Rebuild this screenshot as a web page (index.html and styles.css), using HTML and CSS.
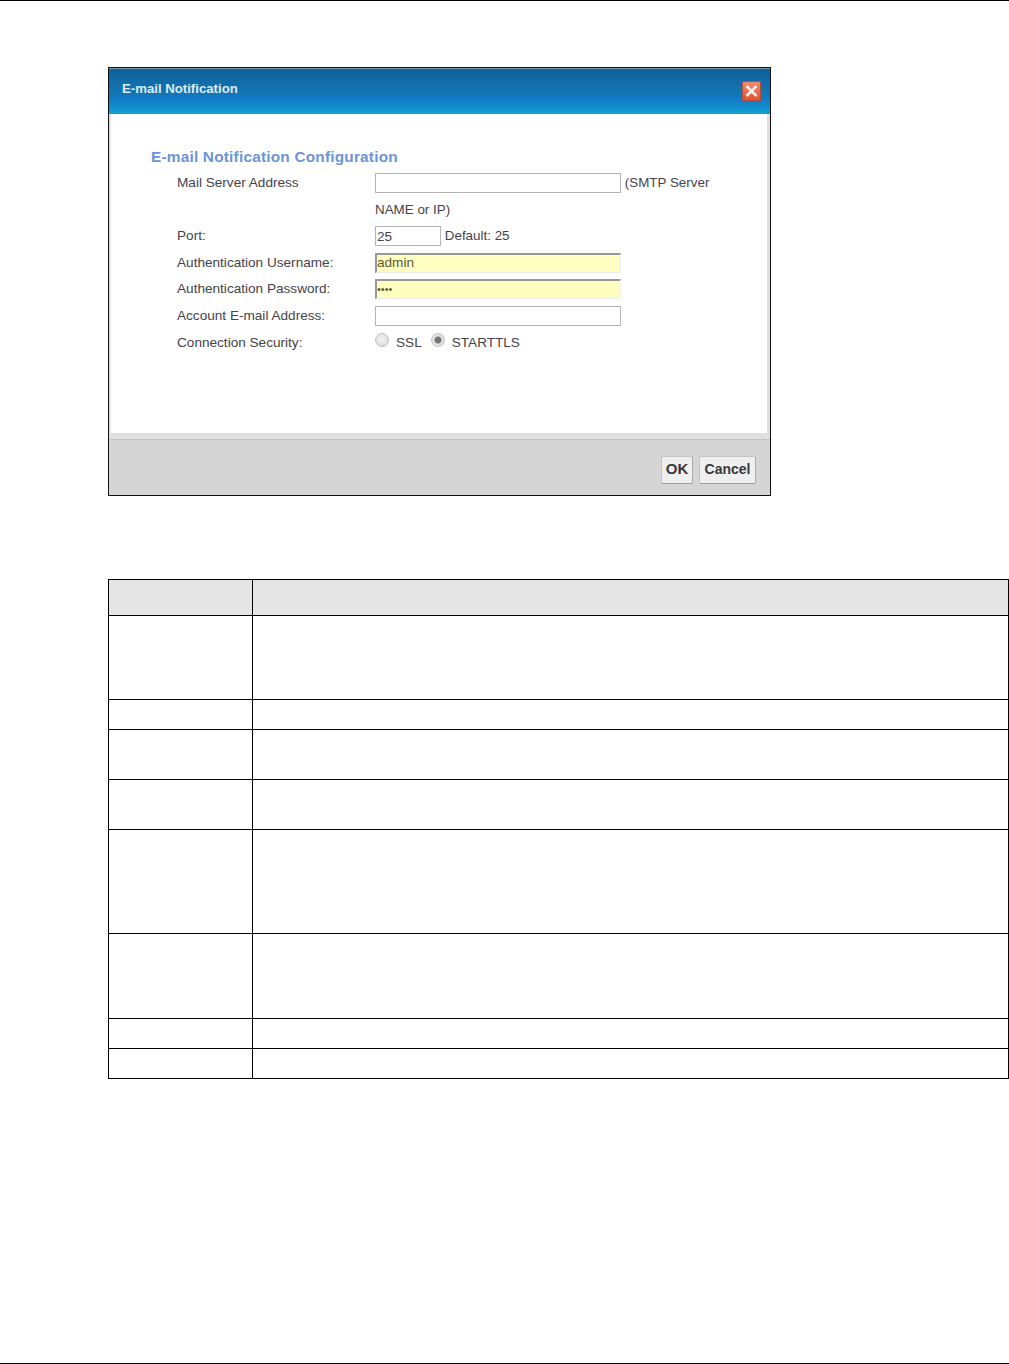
FILE: index.html
```html
<!DOCTYPE html>
<html lang="en">
<head>
<meta charset="utf-8">
<title>E-mail Notification</title>
<link rel="stylesheet" href="styles.css">
</head>
<body>
<div class="page-rule"></div>
<main class="content">
  <section class="dialog">
    <header class="dialog-head">
      <h1 class="dialog-title">E-mail Notification</h1>
      <button class="close" type="button" aria-label="Close">
        <svg width="19" height="20" viewBox="0 0 19 20">
          <defs>
            <linearGradient id="closebg" x1="0" y1="0" x2="0" y2="1">
              <stop offset="0" stop-color="#f08a70"/>
              <stop offset="1" stop-color="#e2502f"/>
            </linearGradient>
          </defs>
          <rect x="0.5" y="0.5" width="18" height="19" fill="url(#closebg)" stroke="#a8513f"/>
          <path d="M4.5 5 L14.5 15 M14.5 5 L4.5 15" stroke="#fbeee8" stroke-width="2.6" fill="none"/>
        </svg>
      </button>
    </header>
    <div class="dialog-body">
      <h2 class="section-title">E-mail Notification Configuration</h2>
      <div class="form">
        <div class="label">Mail Server Address</div>
        <div class="control control-wrap"><input class="field wide" type="text"> <span class="hint">(SMTP Server NAME or IP)</span></div>
        <div class="label">Port:</div>
        <div class="control"><input class="field port" type="text" value="25"> <span class="hint">Default: 25</span></div>
        <div class="label">Authentication Username:</div>
        <div class="control"><input class="field wide filled" type="text" value="admin"></div>
        <div class="label">Authentication Password:</div>
        <div class="control"><input class="field wide filled secret" type="password" value="1234"></div>
        <div class="label">Account E-mail Address:</div>
        <div class="control"><input class="field wide" type="text"></div>
        <div class="label">Connection Security:</div>
        <div class="control radios">
          <label class="radio-item"><input class="radio" type="radio" name="sec"> SSL</label>
          <label class="radio-item"><input class="radio" type="radio" name="sec" checked> STARTTLS</label>
        </div>
      </div>
    </div>
    <footer class="dialog-foot">
      <button class="btn btn-ok" type="button">OK</button>
      <button class="btn" type="button">Cancel</button>
    </footer>
  </section>

  <table class="spec">
    <colgroup><col class="col-a"><col></colgroup>
    <tr class="r-head"><th></th><th></th></tr>
    <tr class="r84"><td></td><td></td></tr>
    <tr class="r30"><td></td><td></td></tr>
    <tr class="r50"><td></td><td></td></tr>
    <tr class="r50"><td></td><td></td></tr>
    <tr class="r104"><td></td><td></td></tr>
    <tr class="r85"><td></td><td></td></tr>
    <tr class="r30"><td></td><td></td></tr>
    <tr class="r30"><td></td><td></td></tr>
  </table>
</main>
<div class="page-rule page-rule-bottom"></div>
</body>
</html>
```
FILE: styles.css
```css
* { box-sizing: border-box; }
html, body { height: 100%; }
body {
  margin: 0;
  min-height: 1364px;
  background: #fff;
  display: flex;
  flex-direction: column;
  font-family: "Liberation Sans", Arial, sans-serif;
  overflow: hidden;
}
.page-rule { height: 1px; background: #000; flex: none; }
.page-rule-bottom { margin-top: auto; }
.content { padding: 66px 0 0 108px; }

.dialog {
  width: 663px;
  height: 429px;
  border: 1px solid #111;
  display: flex;
  flex-direction: column;
  background: #fff;
}
.dialog-head {
  height: 46px;
  flex: none;
  display: flex;
  align-items: center;
  justify-content: space-between;
  padding: 0 9px 5px 13px;
  border-top: 1px solid #7b9fb4;
  background: linear-gradient(180deg, #0f6199 0%, #1478b8 60%, #0e76c6 62%, #14a0d0 100%);
}
.dialog-title {
  margin: 0;
  font-size: 13.2px;
  line-height: 18px;
  font-weight: bold;
  color: #dcebf5;
}
.close {
  padding: 0;
  border: 0;
  background: none;
  display: block;
  height: 20px;
  margin-top: 3px;
}
.close svg { display: block; }

.dialog-body {
  flex: 1;
  padding: 33px 0 0 40px;
  border-left: 2px solid #e2e2e2;
  border-right: 3px solid #dedede;
  color: #474349;
}
.section-title {
  margin: 0 0 3px;
  font-size: 15.4px;
  line-height: 19px;
  font-weight: bold;
  letter-spacing: 0.2px;
  color: #6c94da;
}
.form {
  display: grid;
  grid-template-columns: 198px 340px;
  grid-auto-rows: minmax(26.6px, auto);
  margin-left: 26px;
  font-size: 13.6px;
  line-height: 26.6px;
}
.label { height: 26.6px; padding-top: 1px; white-space: nowrap; }
.control { height: 26.6px; white-space: nowrap; }
.control-wrap { height: 53.2px; white-space: normal; line-height: 26.6px; }
.field {
  height: 20px;
  vertical-align: middle;
  margin: 1.4px 0 0;
  padding: 0 1px;
  font: 13.6px "Liberation Sans", Arial, sans-serif;
  color: #474349;
  background: #fff;
  border: 1px solid #b4b4b4;
  outline: 0;
}
.wide { width: 246px; }
.port { width: 66px; }
.hint { font-size: 13.4px; line-height: 18px; vertical-align: -1px; }
.filled {
  background: #ffffc0;
  border-style: solid;
  border-width: 2px 1px 1px 2px;
  border-color: #989898 #f0f0f0 #ececec #989898;
  padding: 0 1px 1px 0;
  color: #5a5a3a;
}
.secret { font-size: 11px; letter-spacing: 0; }
.radios { display: flex; gap: 9px; }
.radio-item { display: flex; align-items: center; gap: 7px; padding-top: 2px; }
.radio {
  appearance: none;
  width: 14px;
  height: 14px;
  margin: -6px 0 0;
  border-radius: 50%;
  border: 1px solid #c2c2c2;
  background: radial-gradient(circle at 50% 40%, #f2f2f2, #d8d8d8);
}
.radio:checked {
  background: radial-gradient(circle, #777 0 3px, #e4e4e4 4px, #dcdcdc 100%);
}

.dialog-foot {
  height: 62px;
  flex: none;
  display: flex;
  justify-content: flex-end;
  align-items: flex-start;
  gap: 6px;
  padding: 23px 14px 0 0;
  background: linear-gradient(180deg, #dfdfdf 0, #dfdfdf 6px, #c4c4c4 6px, #c4c4c4 7px, #d5d5d5 7px);
}
.btn {
  height: 28px;
  padding: 0 4.5px 3px;
  font: bold 14px "Liberation Sans", Arial, sans-serif;
  color: #38383c;
  background: #efefef;
  border: 1px solid #c4c4c4;
  border-bottom-color: #9c9c9c;
  border-right-color: #aaa;
  border-radius: 2px;
}
.btn-ok { width: 32px; padding-left: 0; padding-right: 0; font-size: 15px; }

.spec {
  width: 901px;
  margin-top: 83px;
  table-layout: fixed;
  border-collapse: collapse;
  border-top: 1px solid #000;
}
.spec th, .spec td { border: 1px solid #000; padding: 0; }
.spec th { background: #e5e5e5; }
.col-a { width: 144px; }
.r-head { height: 36px; }
.r84 { height: 84px; }
.r30 { height: 30px; }
.r50 { height: 50px; }
.r104 { height: 104px; }
.r85 { height: 85px; }
```
